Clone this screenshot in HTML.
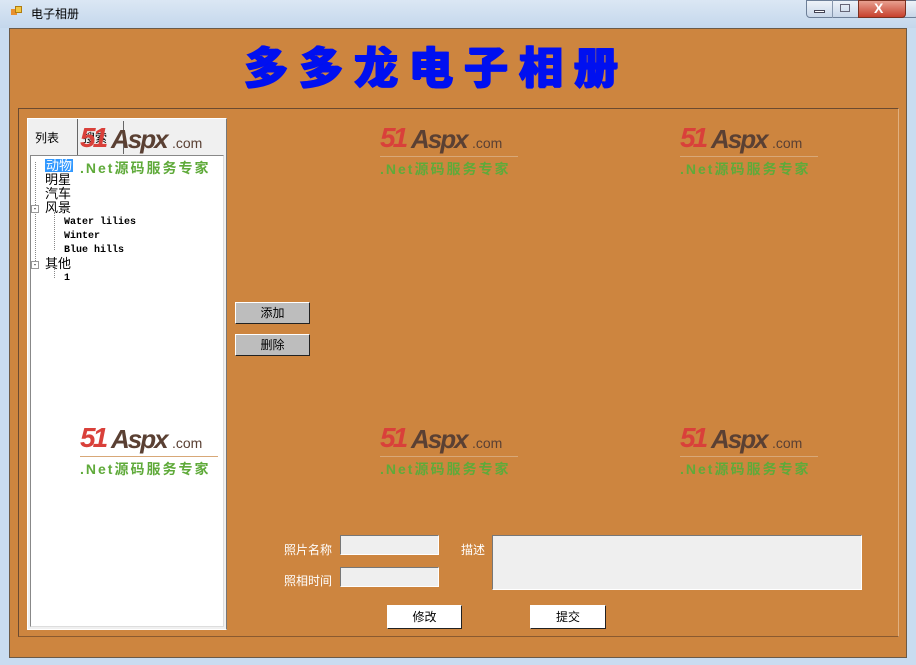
<!DOCTYPE html>
<html><head><meta charset="utf-8"><style>
*{margin:0;padding:0;box-sizing:border-box}
body{width:916px;height:665px;overflow:hidden;background:#c9dcf0;font-family:"Liberation Sans","Noto Sans CJK SC",sans-serif;position:relative;font-size:12px}
.abs{position:absolute}
.client{left:9px;top:28px;width:898px;height:630px;background:#cd853f;border:1px solid #6b5a48}
.logo{position:absolute;width:140px;height:60px}
.logo .n{position:absolute;left:0;top:-2px;font:italic bold 28px "Liberation Sans",sans-serif;color:#d9403a;letter-spacing:-3px}
.logo .a{position:absolute;left:31px;top:0px;font:italic bold 26px "Liberation Sans",sans-serif;color:#5a4033;letter-spacing:-2px}
.logo .c{position:absolute;left:92px;top:11px;font:14px "Liberation Sans",sans-serif;color:#5a4033}
.logo .l{position:absolute;left:0;top:32px;width:138px;height:1px;background:#d8a878}
.logo .g{position:absolute;left:0;top:35px;font:bold 14px "Liberation Sans","Noto Sans CJK SC",sans-serif;color:#5faa3a;white-space:nowrap;letter-spacing:2px}
.btn{position:absolute;background:#bdbdbd;border:1px solid;border-color:#fff #222 #222 #fff;text-align:center;font-size:12px;line-height:20px}
.tb{position:absolute;background:#efefef;border:1px solid;border-color:#777 #fff #fff #777}
.lbl{position:absolute;color:#fff;font-size:12px}
.tree div{position:absolute;font-size:13px;line-height:13px;white-space:nowrap}
.mono{font-family:"Liberation Mono",monospace;font-size:10px!important;font-weight:bold}
</style></head><body>
<div class="abs" style="left:0;top:0;width:916px;height:28px;background:linear-gradient(#dbe7f4,#c4d7ec)"></div>
<div class="abs" style="left:11px;top:9px;width:6px;height:6px;background:#e89030"></div>
<div class="abs" style="left:15px;top:6px;width:7px;height:7px;background:#f3c640;border:1px solid #b07c10"></div>
<div class="abs" style="left:31px;top:5px;font-size:12px;color:#000">电子相册</div>
<div class="abs" style="left:806px;top:0;width:113px;height:18px;border:1px solid #6d7f98;border-radius:0 0 4px 4px;background:linear-gradient(#eef3f9,#c8d6e8)"></div>
<div class="abs" style="left:832px;top:0;width:1px;height:18px;background:#8898ae"></div>
<div class="abs" style="left:858px;top:0;width:48px;height:18px;background:linear-gradient(#e8a090,#c7402c);border:1px solid #7a3020;border-radius:0 0 4px 0"></div>
<div class="abs" style="left:814px;top:10px;width:11px;height:3px;background:#fff;border:1px solid #445"></div>
<div class="abs" style="left:840px;top:4px;width:10px;height:8px;border:1px solid #667"></div>
<div class="abs" style="left:874px;top:0px;color:#fff;font:bold 14px 'Liberation Sans'">X</div>
<div class="abs client"></div>
<div class="abs" style="left:244px;top:32px;font:900 44px 'Noto Sans CJK SC',sans-serif;color:#0010f0;letter-spacing:11px;text-shadow:1px 0 0 #0010f0,-1px 0 0 #0010f0,0 1px 0 #0010f0">多多龙电子相册</div>
<div class="abs" style="left:18px;top:108px;width:881px;height:529px;border:1px solid #6b4a30;border-right-color:#e0b080;border-bottom-color:#8a5a30"></div>
<div class="abs" style="left:27px;top:118px;width:200px;height:512px;background:#f0f0f0;border:1px solid #fff;border-right-color:#777"></div>
<div class="abs" style="left:28px;top:119px;width:50px;height:38px;background:#f0f0f0;border-right:1px solid #666"></div>
<div class="abs" style="left:35px;top:129px;font-size:12px">列表</div>
<div class="abs" style="left:83px;top:129px;font-size:12px">搜索</div>
<div class="abs" style="left:123px;top:121px;width:1px;height:33px;background:#666"></div>
<div class="abs" style="left:30px;top:155px;width:194px;height:472px;background:#fff;border:1px solid #888;border-right-color:#ddd;border-bottom-color:#ddd"></div>
<div class="tree">
<div style="left:45px;top:159px;background:#3399ff;color:#fff;padding:0 1px">动物</div>
<div style="left:45px;top:173px">明星</div>
<div style="left:45px;top:187px">汽车</div>
<div style="left:45px;top:201px">风景</div>
<div class="mono" style="left:64px;top:216px">Water lilies</div>
<div class="mono" style="left:64px;top:230px">Winter</div>
<div class="mono" style="left:64px;top:244px">Blue hills</div>
<div style="left:45px;top:257px">其他</div>
<div class="mono" style="left:64px;top:272px">1</div>
</div>
<div class="abs" style="left:35px;top:162px;width:1px;height:101px;border-left:1px dotted #888"></div>
<div class="abs" style="left:54px;top:212px;width:1px;height:38px;border-left:1px dotted #888"></div>
<div class="abs" style="left:54px;top:268px;width:1px;height:10px;border-left:1px dotted #888"></div>
<div class="abs" style="left:31px;top:205px;width:8px;height:8px;border:1px solid #999;background:#fff;font-size:8px;line-height:5px;text-align:center">-</div>
<div class="abs" style="left:31px;top:261px;width:8px;height:8px;border:1px solid #999;background:#fff;font-size:8px;line-height:5px;text-align:center">-</div>

<div class="logo" style="left:80px;top:124px"><span class="n">51</span><span class="a">Aspx</span><span class="c">.com</span><span class="g" style="top:34px">.Net源码服务专家</span></div>
<div class="logo" style="left:380px;top:124px"><span class="n">51</span><span class="a">Aspx</span><span class="c">.com</span><span class="l"></span><span class="g">.Net源码服务专家</span></div>
<div class="logo" style="left:680px;top:124px"><span class="n">51</span><span class="a">Aspx</span><span class="c">.com</span><span class="l"></span><span class="g">.Net源码服务专家</span></div>
<div class="logo" style="left:80px;top:424px"><span class="n">51</span><span class="a">Aspx</span><span class="c">.com</span><span class="l"></span><span class="g">.Net源码服务专家</span></div>
<div class="logo" style="left:380px;top:424px"><span class="n">51</span><span class="a">Aspx</span><span class="c">.com</span><span class="l"></span><span class="g">.Net源码服务专家</span></div>
<div class="logo" style="left:680px;top:424px"><span class="n">51</span><span class="a">Aspx</span><span class="c">.com</span><span class="l"></span><span class="g">.Net源码服务专家</span></div>

<div class="btn" style="left:235px;top:302px;width:75px;height:22px">添加</div>
<div class="btn" style="left:235px;top:334px;width:75px;height:22px">删除</div>

<div class="lbl" style="left:284px;top:541px">照片名称</div>
<div class="lbl" style="left:284px;top:572px">照相时间</div>
<div class="lbl" style="left:461px;top:541px">描述</div>
<div class="tb" style="left:340px;top:535px;width:99px;height:20px"></div>
<div class="tb" style="left:340px;top:567px;width:99px;height:20px"></div>
<div class="tb" style="left:492px;top:535px;width:370px;height:55px"></div>
<div class="btn" style="left:387px;top:605px;width:75px;height:24px;background:#fff;line-height:22px">修改</div>
<div class="btn" style="left:530px;top:605px;width:76px;height:24px;background:#fff;line-height:22px">提交</div>
</body></html>
